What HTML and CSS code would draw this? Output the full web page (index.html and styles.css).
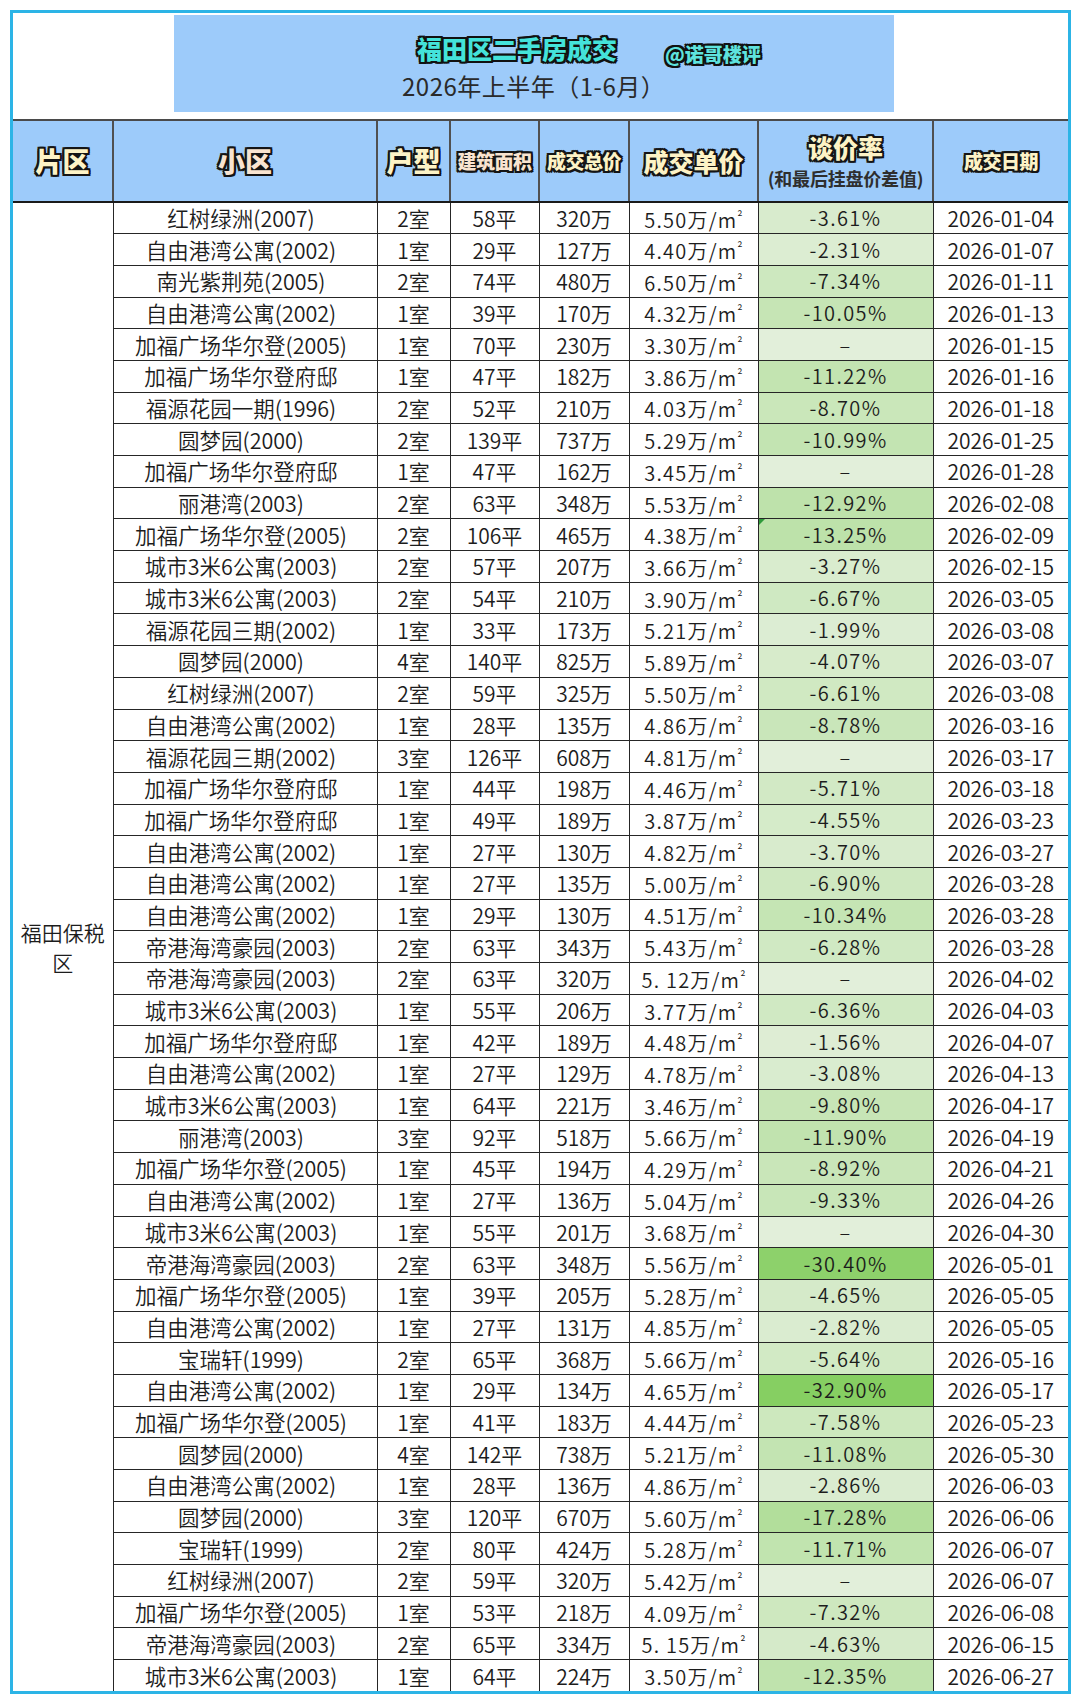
FILE: index.html
```html
<!DOCTYPE html>
<html lang="zh-CN">
<head>
<meta charset="utf-8">
<title>福田区二手房成交</title>
<link rel="stylesheet" href="styles.css">
</head>
<body>
<div class="frame">
  <div class="title-area">
    <div class="title-box">
      <div class="title-line"><span class="title">福田区二手房成交</span><span class="handle">@诺哥楼评</span></div>
      <div class="subtitle">2026年上半年（1-6月）</div>
    </div>
  </div>
  <table class="deals">
    <colgroup>
      <col class="w-area"><col class="w-name"><col class="w-type"><col class="w-size"><col class="w-total"><col class="w-unit"><col class="w-rate"><col class="w-date">
    </colgroup>
    <thead>
      <tr>
        <th><span class="hd big">片区</span></th>
        <th><span class="hd big peach">小区</span></th>
        <th><span class="hd big">户型</span></th>
        <th><span class="hd small peach">建筑面积</span></th>
        <th><span class="hd small">成交总价</span></th>
        <th><span class="hd mid">成交单价</span></th>
        <th class="rate-head"><span class="hd mid">谈价率</span><span class="note">(和最后挂盘价差值)</span></th>
        <th class="date-head"><span class="hd small">成交日期</span></th>
      </tr>
    </thead>
    <tbody>
      <tr><td class="area" rowspan="47">福田保税区</td><td class="name">红树绿洲(2007)</td><td>2室</td><td>58平</td><td>320万</td><td class="unit">5.50万/m<span class="sq">²</span></td><td class="rate" style="--v:3.61">-3.61%</td><td>2026-01-04</td></tr>
      <tr><td class="name">自由港湾公寓(2002)</td><td>1室</td><td>29平</td><td>127万</td><td class="unit">4.40万/m<span class="sq">²</span></td><td class="rate" style="--v:2.31">-2.31%</td><td>2026-01-07</td></tr>
      <tr><td class="name">南光紫荆苑(2005)</td><td>2室</td><td>74平</td><td>480万</td><td class="unit">6.50万/m<span class="sq">²</span></td><td class="rate" style="--v:7.34">-7.34%</td><td>2026-01-11</td></tr>
      <tr><td class="name">自由港湾公寓(2002)</td><td>1室</td><td>39平</td><td>170万</td><td class="unit">4.32万/m<span class="sq">²</span></td><td class="rate" style="--v:10.05">-10.05%</td><td>2026-01-13</td></tr>
      <tr><td class="name">加福广场华尔登(2005)</td><td>1室</td><td>70平</td><td>230万</td><td class="unit">3.30万/m<span class="sq">²</span></td><td class="rate" style="--v:0">–</td><td>2026-01-15</td></tr>
      <tr><td class="name">加福广场华尔登府邸</td><td>1室</td><td>47平</td><td>182万</td><td class="unit">3.86万/m<span class="sq">²</span></td><td class="rate" style="--v:11.22">-11.22%</td><td>2026-01-16</td></tr>
      <tr><td class="name">福源花园一期(1996)</td><td>2室</td><td>52平</td><td>210万</td><td class="unit">4.03万/m<span class="sq">²</span></td><td class="rate" style="--v:8.70">-8.70%</td><td>2026-01-18</td></tr>
      <tr><td class="name">圆梦园(2000)</td><td>2室</td><td>139平</td><td>737万</td><td class="unit">5.29万/m<span class="sq">²</span></td><td class="rate" style="--v:10.99">-10.99%</td><td>2026-01-25</td></tr>
      <tr><td class="name">加福广场华尔登府邸</td><td>1室</td><td>47平</td><td>162万</td><td class="unit">3.45万/m<span class="sq">²</span></td><td class="rate" style="--v:0">–</td><td>2026-01-28</td></tr>
      <tr><td class="name">丽港湾(2003)</td><td>2室</td><td>63平</td><td>348万</td><td class="unit">5.53万/m<span class="sq">²</span></td><td class="rate" style="--v:12.92">-12.92%</td><td>2026-02-08</td></tr>
      <tr><td class="name">加福广场华尔登(2005)</td><td>2室</td><td>106平</td><td>465万</td><td class="unit">4.38万/m<span class="sq">²</span></td><td class="rate flag" style="--v:13.25">-13.25%</td><td>2026-02-09</td></tr>
      <tr><td class="name">城市3米6公寓(2003)</td><td>2室</td><td>57平</td><td>207万</td><td class="unit">3.66万/m<span class="sq">²</span></td><td class="rate" style="--v:3.27">-3.27%</td><td>2026-02-15</td></tr>
      <tr><td class="name">城市3米6公寓(2003)</td><td>2室</td><td>54平</td><td>210万</td><td class="unit">3.90万/m<span class="sq">²</span></td><td class="rate" style="--v:6.67">-6.67%</td><td>2026-03-05</td></tr>
      <tr><td class="name">福源花园三期(2002)</td><td>1室</td><td>33平</td><td>173万</td><td class="unit">5.21万/m<span class="sq">²</span></td><td class="rate" style="--v:1.99">-1.99%</td><td>2026-03-08</td></tr>
      <tr><td class="name">圆梦园(2000)</td><td>4室</td><td>140平</td><td>825万</td><td class="unit">5.89万/m<span class="sq">²</span></td><td class="rate" style="--v:4.07">-4.07%</td><td>2026-03-07</td></tr>
      <tr><td class="name">红树绿洲(2007)</td><td>2室</td><td>59平</td><td>325万</td><td class="unit">5.50万/m<span class="sq">²</span></td><td class="rate" style="--v:6.61">-6.61%</td><td>2026-03-08</td></tr>
      <tr><td class="name">自由港湾公寓(2002)</td><td>1室</td><td>28平</td><td>135万</td><td class="unit">4.86万/m<span class="sq">²</span></td><td class="rate" style="--v:8.78">-8.78%</td><td>2026-03-16</td></tr>
      <tr><td class="name">福源花园三期(2002)</td><td>3室</td><td>126平</td><td>608万</td><td class="unit">4.81万/m<span class="sq">²</span></td><td class="rate" style="--v:0">–</td><td>2026-03-17</td></tr>
      <tr><td class="name">加福广场华尔登府邸</td><td>1室</td><td>44平</td><td>198万</td><td class="unit">4.46万/m<span class="sq">²</span></td><td class="rate" style="--v:5.71">-5.71%</td><td>2026-03-18</td></tr>
      <tr><td class="name">加福广场华尔登府邸</td><td>1室</td><td>49平</td><td>189万</td><td class="unit">3.87万/m<span class="sq">²</span></td><td class="rate" style="--v:4.55">-4.55%</td><td>2026-03-23</td></tr>
      <tr><td class="name">自由港湾公寓(2002)</td><td>1室</td><td>27平</td><td>130万</td><td class="unit">4.82万/m<span class="sq">²</span></td><td class="rate" style="--v:3.70">-3.70%</td><td>2026-03-27</td></tr>
      <tr><td class="name">自由港湾公寓(2002)</td><td>1室</td><td>27平</td><td>135万</td><td class="unit">5.00万/m<span class="sq">²</span></td><td class="rate" style="--v:6.90">-6.90%</td><td>2026-03-28</td></tr>
      <tr><td class="name">自由港湾公寓(2002)</td><td>1室</td><td>29平</td><td>130万</td><td class="unit">4.51万/m<span class="sq">²</span></td><td class="rate" style="--v:10.34">-10.34%</td><td>2026-03-28</td></tr>
      <tr><td class="name">帝港海湾豪园(2003)</td><td>2室</td><td>63平</td><td>343万</td><td class="unit">5.43万/m<span class="sq">²</span></td><td class="rate" style="--v:6.28">-6.28%</td><td>2026-03-28</td></tr>
      <tr><td class="name">帝港海湾豪园(2003)</td><td>2室</td><td>63平</td><td>320万</td><td class="unit">5. 12万/m<span class="sq">²</span></td><td class="rate" style="--v:0">–</td><td>2026-04-02</td></tr>
      <tr><td class="name">城市3米6公寓(2003)</td><td>1室</td><td>55平</td><td>206万</td><td class="unit">3.77万/m<span class="sq">²</span></td><td class="rate" style="--v:6.36">-6.36%</td><td>2026-04-03</td></tr>
      <tr><td class="name">加福广场华尔登府邸</td><td>1室</td><td>42平</td><td>189万</td><td class="unit">4.48万/m<span class="sq">²</span></td><td class="rate" style="--v:1.56">-1.56%</td><td>2026-04-07</td></tr>
      <tr><td class="name">自由港湾公寓(2002)</td><td>1室</td><td>27平</td><td>129万</td><td class="unit">4.78万/m<span class="sq">²</span></td><td class="rate" style="--v:3.08">-3.08%</td><td>2026-04-13</td></tr>
      <tr><td class="name">城市3米6公寓(2003)</td><td>1室</td><td>64平</td><td>221万</td><td class="unit">3.46万/m<span class="sq">²</span></td><td class="rate" style="--v:9.80">-9.80%</td><td>2026-04-17</td></tr>
      <tr><td class="name">丽港湾(2003)</td><td>3室</td><td>92平</td><td>518万</td><td class="unit">5.66万/m<span class="sq">²</span></td><td class="rate" style="--v:11.90">-11.90%</td><td>2026-04-19</td></tr>
      <tr><td class="name">加福广场华尔登(2005)</td><td>1室</td><td>45平</td><td>194万</td><td class="unit">4.29万/m<span class="sq">²</span></td><td class="rate" style="--v:8.92">-8.92%</td><td>2026-04-21</td></tr>
      <tr><td class="name">自由港湾公寓(2002)</td><td>1室</td><td>27平</td><td>136万</td><td class="unit">5.04万/m<span class="sq">²</span></td><td class="rate" style="--v:9.33">-9.33%</td><td>2026-04-26</td></tr>
      <tr><td class="name">城市3米6公寓(2003)</td><td>1室</td><td>55平</td><td>201万</td><td class="unit">3.68万/m<span class="sq">²</span></td><td class="rate" style="--v:0">–</td><td>2026-04-30</td></tr>
      <tr><td class="name">帝港海湾豪园(2003)</td><td>2室</td><td>63平</td><td>348万</td><td class="unit">5.56万/m<span class="sq">²</span></td><td class="rate" style="--v:30.40">-30.40%</td><td>2026-05-01</td></tr>
      <tr><td class="name">加福广场华尔登(2005)</td><td>1室</td><td>39平</td><td>205万</td><td class="unit">5.28万/m<span class="sq">²</span></td><td class="rate" style="--v:4.65">-4.65%</td><td>2026-05-05</td></tr>
      <tr><td class="name">自由港湾公寓(2002)</td><td>1室</td><td>27平</td><td>131万</td><td class="unit">4.85万/m<span class="sq">²</span></td><td class="rate" style="--v:2.82">-2.82%</td><td>2026-05-05</td></tr>
      <tr><td class="name">宝瑞轩(1999)</td><td>2室</td><td>65平</td><td>368万</td><td class="unit">5.66万/m<span class="sq">²</span></td><td class="rate" style="--v:5.64">-5.64%</td><td>2026-05-16</td></tr>
      <tr><td class="name">自由港湾公寓(2002)</td><td>1室</td><td>29平</td><td>134万</td><td class="unit">4.65万/m<span class="sq">²</span></td><td class="rate" style="--v:32.90">-32.90%</td><td>2026-05-17</td></tr>
      <tr><td class="name">加福广场华尔登(2005)</td><td>1室</td><td>41平</td><td>183万</td><td class="unit">4.44万/m<span class="sq">²</span></td><td class="rate" style="--v:7.58">-7.58%</td><td>2026-05-23</td></tr>
      <tr><td class="name">圆梦园(2000)</td><td>4室</td><td>142平</td><td>738万</td><td class="unit">5.21万/m<span class="sq">²</span></td><td class="rate" style="--v:11.08">-11.08%</td><td>2026-05-30</td></tr>
      <tr><td class="name">自由港湾公寓(2002)</td><td>1室</td><td>28平</td><td>136万</td><td class="unit">4.86万/m<span class="sq">²</span></td><td class="rate" style="--v:2.86">-2.86%</td><td>2026-06-03</td></tr>
      <tr><td class="name">圆梦园(2000)</td><td>3室</td><td>120平</td><td>670万</td><td class="unit">5.60万/m<span class="sq">²</span></td><td class="rate" style="--v:17.28">-17.28%</td><td>2026-06-06</td></tr>
      <tr><td class="name">宝瑞轩(1999)</td><td>2室</td><td>80平</td><td>424万</td><td class="unit">5.28万/m<span class="sq">²</span></td><td class="rate" style="--v:11.71">-11.71%</td><td>2026-06-07</td></tr>
      <tr><td class="name">红树绿洲(2007)</td><td>2室</td><td>59平</td><td>320万</td><td class="unit">5.42万/m<span class="sq">²</span></td><td class="rate" style="--v:0">–</td><td>2026-06-07</td></tr>
      <tr><td class="name">加福广场华尔登(2005)</td><td>1室</td><td>53平</td><td>218万</td><td class="unit">4.09万/m<span class="sq">²</span></td><td class="rate" style="--v:7.32">-7.32%</td><td>2026-06-08</td></tr>
      <tr><td class="name">帝港海湾豪园(2003)</td><td>2室</td><td>65平</td><td>334万</td><td class="unit">5. 15万/m<span class="sq">²</span></td><td class="rate" style="--v:4.63">-4.63%</td><td>2026-06-15</td></tr>
      <tr><td class="name">城市3米6公寓(2003)</td><td>1室</td><td>64平</td><td>224万</td><td class="unit">3.50万/m<span class="sq">²</span></td><td class="rate" style="--v:12.35">-12.35%</td><td>2026-06-27</td></tr>
    </tbody>
  </table>
</div>
</body>
</html>
```
FILE: styles.css
```css
* { box-sizing: border-box; }

body {
  margin: 0;
  background: #ffffff;
  font-family: "Noto Sans CJK SC", "Noto Sans", sans-serif;
  color: #1c1c1c;
}

.frame {
  margin: 10px 0 0 10px;
  width: 1061px;
  border: 3px solid #2cb4e6;
  background: #ffffff;
}

.title-area {
  height: 108px;
  padding-top: 2px;
  border-bottom: 2px solid #4a4a4a;
}

.title-box {
  margin-left: 161px;
  width: 720px;
  height: 97px;
  background: #9dcbfa;
  padding-top: 17px;
}

.title-line {
  display: flex;
  align-items: flex-end;
  height: 32px;
  padding-left: 243px;
}

.title {
  font-size: 25px;
  font-weight: 900;
  line-height: 32px;
  color: #44e3da;
  text-shadow: -2px -2px 0 #111, 2px -2px 0 #111, -2px 2px 0 #111, 2px 2px 0 #111,
               0 -2px 0 #111, 0 2px 0 #111, -2px 0 0 #111, 2px 0 0 #111;
}

.handle {
  margin-left: 48px;
  margin-bottom: -3px;
  font-size: 19px;
  font-weight: 900;
  line-height: 26px;
  color: #5fe3de;
  text-shadow: -2px -2px 0 #111, 2px -2px 0 #111, -2px 2px 0 #111, 2px 2px 0 #111,
               0 -2px 0 #111, 0 2px 0 #111, -2px 0 0 #111, 2px 0 0 #111;
}

.subtitle {
  margin-top: 7px;
  padding-left: 228px;
  font-size: 24px;
  line-height: 30px;
  color: #2a2a2a;
  letter-spacing: 0.5px;
}

.deals {
  width: 1055px;
  table-layout: fixed;
  border-collapse: collapse;
  border-style: hidden;
}

.w-area { width: 100px; }
.w-name { width: 264px; }
.w-type { width: 73px; }
.w-size { width: 89px; }
.w-total { width: 90px; }
.w-unit { width: 129px; }
.w-rate { width: 175px; }
.w-date { width: 135px; }

.deals th {
  height: 81px;
  padding: 0;
  background: #9dcbfa;
  border-left: 2px solid #505050;
  border-right: 2px solid #505050;
  border-bottom: 2px solid #1a1a1a;
  text-align: center;
  vertical-align: middle;
}

.hd {
  display: block;
  font-weight: 900;
  color: #fdf3c6;
  line-height: 1.15;
  text-shadow: -2px -2px 0 #151515, 2px -2px 0 #151515, -2px 2px 0 #151515, 2px 2px 0 #151515,
               0 -2px 0 #151515, 0 2px 0 #151515, -2px 0 0 #151515, 2px 0 0 #151515;
}

.hd.big { font-size: 27px; }
.hd.mid { font-size: 25px; }
.hd.small { font-size: 19px; letter-spacing: -0.5px; }
.hd.peach { color: #f9e4d0; }

.rate-head { padding-top: 4px; }
.date-head { padding-top: 14px; }

.note {
  display: block;
  margin-top: 5px;
  font-size: 18px;
  font-weight: 700;
  color: #2e2e2e;
  line-height: 22px;
  letter-spacing: -0.2px;
}

.deals td {
  height: 31.7px;
  padding: 0;
  border: 1.5px solid #262626;
  text-align: center;
  vertical-align: middle;
  font-size: 21px;
  font-weight: 350;
  line-height: 24px;
  white-space: nowrap;
}

.deals td.name {
  font-size: 21.5px;
  padding-right: 8px;
}

.deals td.area {
  white-space: normal;
  padding: 0 4px;
  line-height: 30px;
  background: #ffffff;
}

.deals td.unit { letter-spacing: 1.2px; white-space: pre; font-size: 20px; }

.sq {
  font-size: 13px;
  vertical-align: 6px;
  letter-spacing: 0;
}

.deals td.rate {
  letter-spacing: 1.4px;
  font-size: 20px;
  background: color-mix(in srgb, #86cf62 calc(var(--v) / 32.9 * 100%), #e2efda);
}

.deals td.flag { position: relative; }

.deals td.flag::before {
  content: "";
  position: absolute;
  left: 0;
  top: 0;
  border-top: 6px solid #2e9a3a;
  border-right: 6px solid transparent;
}
```
